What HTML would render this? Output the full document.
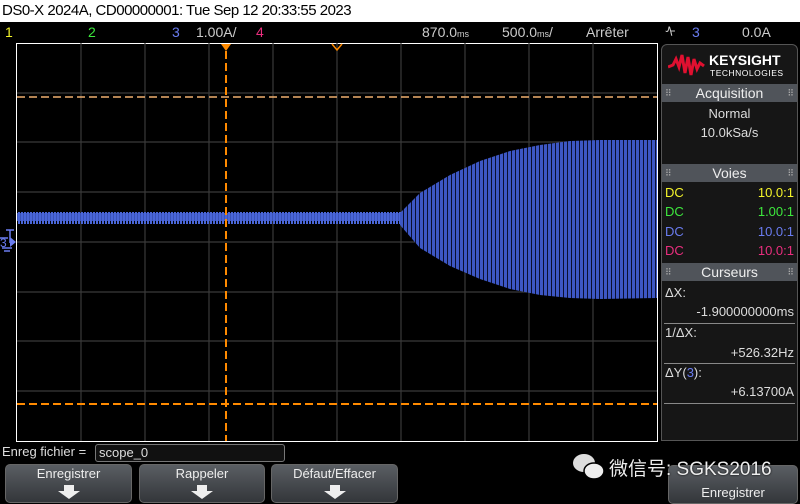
<!DOCTYPE html>
<html><head><meta charset="utf-8"><style>
*{margin:0;padding:0;box-sizing:border-box}
body{width:800px;height:503px;background:#000;overflow:hidden;position:relative;font-family:"Liberation Sans","Noto Sans CJK SC",sans-serif;color:#ddd}
.abs{position:absolute}
.title{left:0;top:0;width:800px;height:22px;background:#fff;color:#000;font-size:15px;line-height:22px;padding-left:2px;letter-spacing:-0.5px}
.top{top:22px;height:21px;font-size:14px;line-height:21px}
.panel{position:absolute;left:661px;top:44px;width:137px;height:397px;background:#161616;border:1px solid #555;border-radius:6px 6px 0 0}
.hdr{position:absolute;left:0;width:135px;height:18px;background:#50545a;color:#eee;font-size:14px;text-align:center;line-height:18px}
.hdr:before,.hdr:after{content:"⠿";position:absolute;top:0;font-size:9px;color:#aaa}
.hdr:before{left:3px}.hdr:after{right:3px}
.t{position:absolute;font-size:13px;line-height:18px}
.btn{position:absolute;top:464px;height:39px;border:1px solid #666;border-radius:5px;background:linear-gradient(#5a5e63,#33363a);color:#eee;font-size:13px;text-align:center;line-height:17px}
.arr{position:absolute;left:50%;bottom:3px;margin-left:-11px;width:0;height:0;border-left:11px solid transparent;border-right:11px solid transparent;border-top:8px solid #eee}
.arr:before{content:"";position:absolute;left:-5px;top:-14px;width:10px;height:6px;background:#eee}
</style></head><body>
<div class="abs title">DS0-X 2024A, CD00000001: Tue Sep 12 20:33:55 2023</div>
<div class="abs top" style="left:5px;color:#f5f52a">1</div>
<div class="abs top" style="left:88px;color:#3de83d">2</div>
<div class="abs top" style="left:172px;color:#6a7cf0">3</div>
<div class="abs top" style="left:196px;color:#ccc">1.00A/</div>
<div class="abs top" style="left:256px;color:#ea2e7e">4</div>
<div class="abs top" style="left:422px;color:#ccc">870.0<span style="font-size:9px">ms</span></div>
<div class="abs top" style="left:502px;color:#ccc">500.0<span style="font-size:9px">ms</span>/</div>
<div class="abs top" style="left:586px;color:#ccc">Arrêter</div>
<div class="abs top" style="left:665px;color:#ccc">ᠰ</div>
<div class="abs top" style="left:692px;color:#6a7cf0">3</div>
<div class="abs top" style="left:742px;color:#ccc">0.0A</div>

<svg class="abs" style="left:0;top:43px" width="660" height="400">
<defs><pattern id="st" width="4" height="10" patternUnits="userSpaceOnUse"><rect width="3" height="10" fill="#3d57c4"/><rect x="3" width="1" height="10" fill="#0a0f30"/></pattern>
<pattern id="st2" width="3" height="12" patternUnits="userSpaceOnUse"><rect width="2" height="12" fill="#4a66d8"/><rect x="2" y="2" width="1" height="8" fill="#3a52b8"/></pattern></defs>
<rect x="16.5" y="0.5" width="641" height="398" fill="#000" stroke="#fff" stroke-width="1"/>
<g stroke="#3a3a3a" stroke-width="1.2">
<line x1="81" y1="0" x2="81" y2="398"/><line x1="145" y1="0" x2="145" y2="398"/><line x1="209" y1="0" x2="209" y2="398"/><line x1="273" y1="0" x2="273" y2="398"/><line x1="337" y1="0" x2="337" y2="398"/><line x1="401" y1="0" x2="401" y2="398"/><line x1="465" y1="0" x2="465" y2="398"/><line x1="529" y1="0" x2="529" y2="398"/><line x1="593" y1="0" x2="593" y2="398"/>
<line x1="17" y1="50" x2="657" y2="50"/><line x1="17" y1="99" x2="657" y2="99"/><line x1="17" y1="149" x2="657" y2="149"/><line x1="17" y1="199" x2="657" y2="199"/><line x1="17" y1="249" x2="657" y2="249"/><line x1="17" y1="298" x2="657" y2="298"/><line x1="17" y1="348" x2="657" y2="348"/>
</g>
<rect x="17" y="169" width="385" height="12" fill="url(#st2)"/>
<polygon points="400,170 420,150 450,132 480,118 510,108 540,102 570,98 600,97 657,97 657,255 600,256 570,255 540,252 510,246 480,236 450,223 420,205 400,182" fill="url(#st)"/>
<g stroke="#ff8a00" stroke-width="2" stroke-dasharray="8,4">
<line x1="226" y1="8" x2="226" y2="398"/>
<line x1="17" y1="361" x2="657" y2="361"/>
</g>
<line x1="17" y1="54" x2="657" y2="54" stroke="#f0b070" stroke-width="1.5" stroke-dasharray="8,4"/>
<polygon points="221,1 231,1 226,8" fill="#ff8a00"/>
<polyline points="332,1 337,7 342,1" fill="none" stroke="#ff8a00" stroke-width="1.5"/>
<path d="M6 187h8M10 187v13M0 195h8M2 205h10M4 208h6" stroke="#6a7cf0" stroke-width="1.5" fill="none"/>
<polygon points="10,194 16,199 10,204" fill="#6a7cf0"/>
<text x="0" y="204" fill="#6a7cf0" font-size="12">3</text>
</svg>

<div class="panel">
<svg class="abs" style="left:6px;top:8px" width="40" height="24"><path d="M0 14 L5 12 L8 6 L11 14 L14 2 L17 20 L20 4 L23 22 L26 6 L29 16 L32 10 L36 13" stroke="#e01030" stroke-width="3" fill="none"/></svg>
<div class="abs" style="left:47px;top:7px;font-size:14px;font-weight:bold;color:#fff">KEYSIGHT</div>
<div class="abs" style="left:48px;top:23px;font-size:8.5px;color:#fff;letter-spacing:0.5px">TECHNOLOGIES</div>
<div class="hdr" style="top:39px">Acquisition</div>
<div class="t" style="left:0;width:135px;text-align:center;top:60px">Normal</div>
<div class="t" style="left:0;width:135px;text-align:center;top:79px">10.0kSa/s</div>
<div class="hdr" style="top:119px">Voies</div>
<div class="t" style="left:3px;top:139px;color:#f5f52a">DC</div><div class="t" style="right:3px;top:139px;color:#f5f52a">10.0:1</div>
<div class="t" style="left:3px;top:158px;color:#3de83d">DC</div><div class="t" style="right:3px;top:158px;color:#3de83d">1.00:1</div>
<div class="t" style="left:3px;top:178px;color:#6a7cf0">DC</div><div class="t" style="right:3px;top:178px;color:#6a7cf0">10.0:1</div>
<div class="t" style="left:3px;top:197px;color:#ea2e7e">DC</div><div class="t" style="right:3px;top:197px;color:#ea2e7e">10.0:1</div>
<div class="hdr" style="top:218px">Curseurs</div>
<div class="t" style="left:3px;top:239px">ΔX:</div>
<div class="t" style="right:3px;top:258px">-1.900000000ms</div>
<div class="abs" style="left:2px;top:278px;width:131px;border-top:1px solid #888"></div>
<div class="t" style="left:3px;top:279px">1/ΔX:</div>
<div class="t" style="right:3px;top:299px">+526.32Hz</div>
<div class="abs" style="left:2px;top:318px;width:131px;border-top:1px solid #888"></div>
<div class="t" style="left:3px;top:319px">ΔY(<span style="color:#6a7cf0">3</span>):</div>
<div class="t" style="right:3px;top:338px">+6.13700A</div>
<div class="abs" style="left:2px;top:358px;width:131px;border-top:1px solid #888"></div>
</div>

<div class="abs" style="left:2px;top:444px;font-size:13px;color:#ddd">Enreg fichier =</div>
<div class="abs" style="left:95px;top:444px;width:190px;height:18px;border:1px solid #777;border-radius:3px;background:#111;font-size:13px;padding-left:3px;line-height:16px;color:#ddd">scope_0</div>

<div class="btn" style="left:5px;width:127px">Enregistrer<div class="arr"></div></div>
<div class="btn" style="left:139px;width:126px">Rappeler<div class="arr"></div></div>
<div class="btn" style="left:271px;width:127px">Défaut/Effacer<div class="arr"></div></div>
<div class="btn" style="left:668px;width:130px;top:465px;padding-top:18px">Enregistrer</div>

<svg class="abs" style="left:572px;top:452px" width="34" height="30"><ellipse cx="12" cy="11" rx="11" ry="9" fill="#ddd"/><ellipse cx="22" cy="19" rx="10" ry="8" fill="#eee" stroke="#000" stroke-width="1.5"/></svg>
<div class="abs" style="left:609px;top:454px;font-size:19px;color:#eee;text-shadow:0 0 2px #000">微信号: SGKS2016</div>
</body></html>
